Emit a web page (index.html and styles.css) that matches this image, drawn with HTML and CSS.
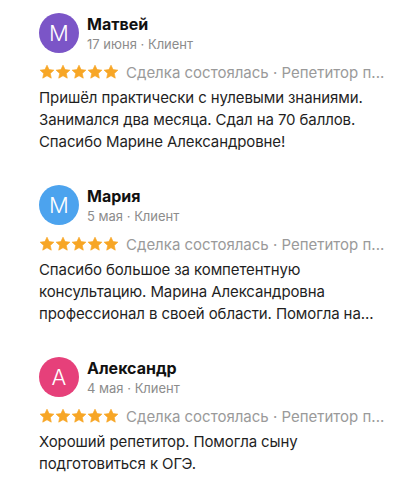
FILE: index.html
```html
<!DOCTYPE html>
<html lang="ru">
<head>
  <meta charset="UTF-8" />
  <title>Отзывы</title>
  <link rel="stylesheet" href="styles.css">
</head>
<body>
  <svg width="0" height="0" class="defs">
    <symbol id="star" viewBox="0 0 24 24">
      <path d="M12 1.8l3.1 6.6 7.2.8-5.4 4.9 1.5 7.1L12 17.6l-6.4 3.6 1.5-7.1-5.4-4.9 7.2-.8z" stroke-linejoin="round" stroke-width="1" stroke="currentColor"/>
    </symbol>
  </svg>

  <div class="reviews">

    <!-- Матвей -->
    <div class="review">
      <div class="author">
        <div class="avatar purple">M</div>
        <div>
          <div class="name">Матвей</div>
          <div class="meta">17 июня · Клиент</div>
        </div>
      </div>
      <div class="rating">
        <span class="stars">
          <svg><use href="#star"/></svg><svg><use href="#star"/></svg><svg><use href="#star"/></svg><svg><use href="#star"/></svg><svg><use href="#star"/></svg>
        </span>
        <span class="tags">Сделка состоялась · Репетитор п...</span>
      </div>
      <p class="text">Пришёл практически с нулевыми знаниями. Занимался два месяца. Сдал на 70 баллов. Спасибо Марине Александровне!</p>
    </div>

    <!-- Мария -->
    <div class="review">
      <div class="author">
        <div class="avatar blue">M</div>
        <div>
          <div class="name">Мария</div>
          <div class="meta">5 мая · Клиент</div>
        </div>
      </div>
      <div class="rating">
        <span class="stars">
          <svg><use href="#star"/></svg><svg><use href="#star"/></svg><svg><use href="#star"/></svg><svg><use href="#star"/></svg><svg><use href="#star"/></svg>
        </span>
        <span class="tags">Сделка состоялась · Репетитор п...</span>
      </div>
      <p class="text">Спасибо большое за компетентную<br>консультацию. Марина Александровна<br>профессионал в своей области. Помогла на...</p>
    </div>

    <!-- Александр -->
    <div class="review">
      <div class="author">
        <div class="avatar pink">A</div>
        <div>
          <div class="name">Александр</div>
          <div class="meta">4 мая · Клиент</div>
        </div>
      </div>
      <div class="rating">
        <span class="stars">
          <svg><use href="#star"/></svg><svg><use href="#star"/></svg><svg><use href="#star"/></svg><svg><use href="#star"/></svg><svg><use href="#star"/></svg>
        </span>
        <span class="tags">Сделка состоялась · Репетитор п...</span>
      </div>
      <p class="text">Хороший репетитор. Помогла сыну<br>подготовиться к ОГЭ.</p>
    </div>

  </div>
</body>
</html>
```

FILE: styles.css
```css
body {
  margin: 0;
  font-family: Inter, 'Noto Sans', sans-serif;
  background: #fff;
  color: #1f1f1f;
}

.defs {
  position: absolute;
}

.reviews {
  padding: 13px 20px 0 39px;
}

.review {
  margin-bottom: 32px;
}

.review:last-child {
  margin-bottom: 0;
}

.author {
  display: flex;
  align-items: center;
  gap: 8px;
}

.avatar {
  width: 40px;
  height: 40px;
  border-radius: 50%;
  color: #fff;
  font-size: 22px;
  font-weight: 300;
  display: flex;
  align-items: center;
  justify-content: center;
  flex-shrink: 0;
}

.purple { background: #7b55c7; }
.blue { background: #4ca3ee; }
.pink { background: #e6407a; }

.name {
  font-size: 16px;
  font-weight: 700;
  color: #111;
  line-height: 20px;
}

.meta {
  font-size: 13px;
  color: #8c8c8c;
  line-height: 18px;
  margin-top: 1px;
}

.rating {
  display: flex;
  align-items: center;
  gap: 7px;
  margin-top: 9px;
  height: 20px;
}

.stars {
  display: flex;
  color: #f7a626;
  flex-shrink: 0;
}

.stars svg {
  width: 16px;
  height: 16px;
  fill: currentColor;
}

.tags {
  font-size: 15px;
  color: #9a9a9a;
  white-space: nowrap;
}

.text {
  margin: 5px 0 0;
  font-size: 15px;
  line-height: 22px;
  letter-spacing: -0.1px;
}
```
